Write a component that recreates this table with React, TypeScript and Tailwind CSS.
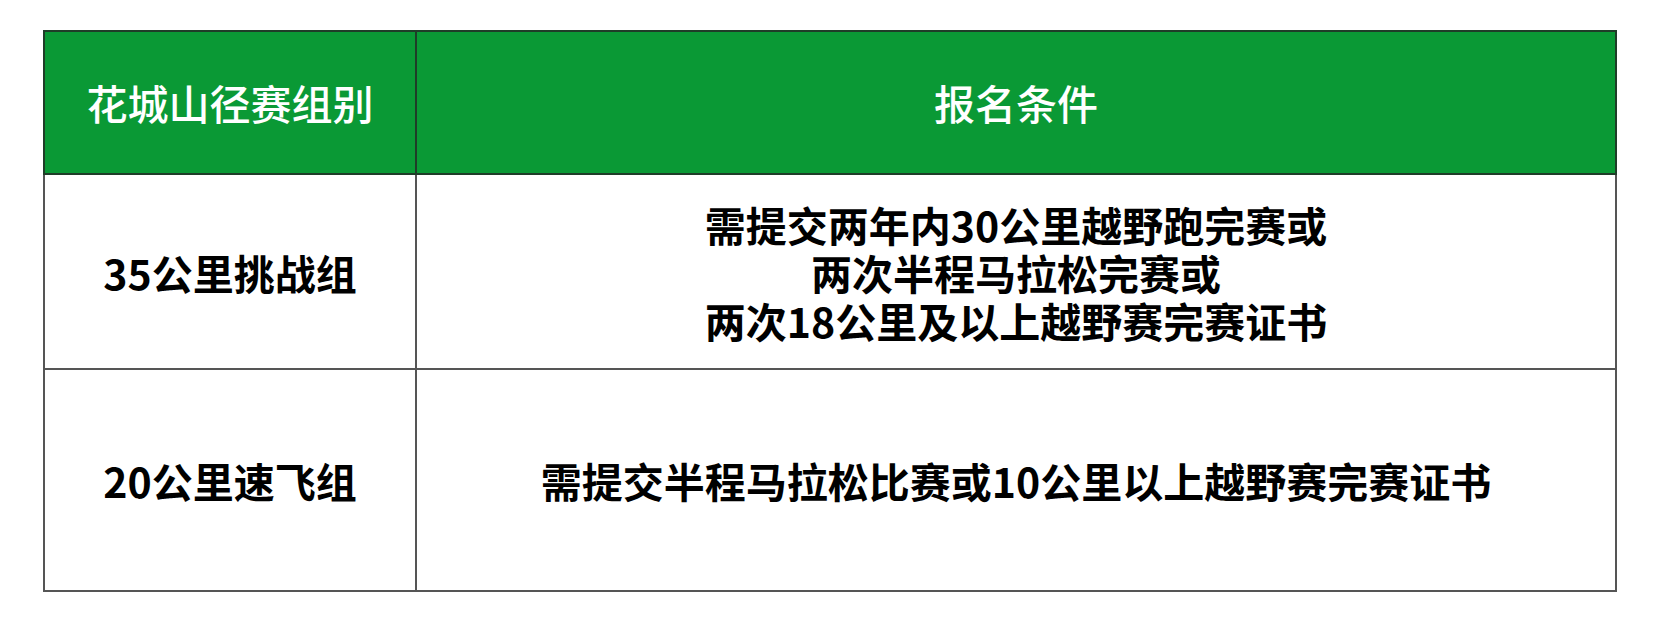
export default function App() {
  const font = { fontFamily: '"Noto Sans CJK SC", "Noto Sans", sans-serif' }
  return (
    <div className="w-[1658px] h-[623px] bg-white pt-[30px] pl-[43px]" style={font}>
      <table className="w-[1574px] border-collapse border-2 border-[#555]">
        <thead>
          <tr className="h-[143px] bg-[#0a9935] text-white text-[41px]">
            <th className="w-[372px] border-2 border-[#1f3d28] font-medium">花城山径赛组别</th>
            <th className="border-2 border-[#1f3d28] font-medium">报名条件</th>
          </tr>
        </thead>
        <tbody className="text-black text-[41px] font-bold leading-[48px]">
          <tr className="h-[195px]">
            <td className="border-2 border-[#555] text-center">35公里挑战组</td>
            <td className="border-2 border-[#555] text-center">
              需提交两年内30公里越野跑完赛或<br />
              两次半程马拉松完赛或<br />
              两次18公里及以上越野赛完赛证书
            </td>
          </tr>
          <tr className="h-[222px]">
            <td className="border-2 border-[#555] text-center">20公里速飞组</td>
            <td className="border-2 border-[#555] text-center">需提交半程马拉松比赛或10公里以上越野赛完赛证书</td>
          </tr>
        </tbody>
      </table>
    </div>
  )
}
